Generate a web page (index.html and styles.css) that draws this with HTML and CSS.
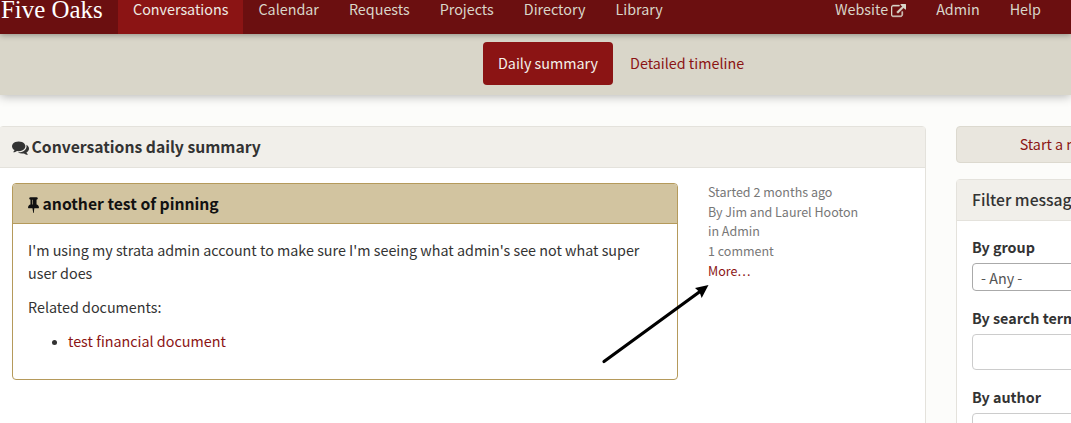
FILE: index.html
```html
<!DOCTYPE html>
<html lang="en">
<head>
<meta charset="utf-8">
<title>Five Oaks</title>
<link rel="stylesheet" href="styles.css">
</head>
<body>
<header class="topbar">
  <a class="brand" href="#">Five Oaks</a>
  <nav class="nav-main">
    <a class="nav-link active" href="#">Conversations</a>
    <a class="nav-link" href="#">Calendar</a>
    <a class="nav-link" href="#">Requests</a>
    <a class="nav-link" href="#">Projects</a>
    <a class="nav-link" href="#">Directory</a>
    <a class="nav-link" href="#">Library</a>
  </nav>
  <nav class="nav-right">
    <a class="nav-link" href="#">Website<svg class="icon-ext" viewBox="0 0 1792 1792"><path fill="currentColor" stroke="currentColor" stroke-width="50" d="M1408 928v320q0 119-84.5 203.5t-203.5 84.5h-832q-119 0-203.5-84.5t-84.5-203.5v-832q0-119 84.5-203.5t203.5-84.5h704q14 0 23 9t9 23v64q0 14-9 23t-23 9h-704q-66 0-113 47t-47 113v832q0 66 47 113t113 47h832q66 0 113-47t47-113v-320q0-14 9-23t23-9h64q14 0 23 9t9 23zm384-864v512q0 26-19 45t-45 19-45-19l-176-176-652 652q-10 10-23 10t-23-10l-114-114q-10-10-10-23t10-23l652-652-176-176q-19-19-19-45t19-45 45-19h512q26 0 45 19t19 45z"/></svg></a>
    <a class="nav-link" href="#">Admin</a>
    <a class="nav-link" href="#">Help</a>
  </nav>
</header>
<div class="subbar">
  <a class="pill active" href="#">Daily summary</a>
  <a class="pill" href="#">Detailed timeline</a>
</div>
<main class="layout">
  <section class="panel panel-main">
    <h2 class="panel-head"><svg class="icon-comments" viewBox="0 0 1792 1792"><path fill="currentColor" d="M1408 768q0 139-94 257t-256.500 186.500-353.500 68.500q-86 0-176-16-124 88-278 128-36 9-86 16h-3q-11 0-20.500-8t-11.500-21q-1-3-1-6.500t.5-6.500 2-6l2.500-5 3.500-5.500 4-5 4.500-5 4-4.500q5-6 23-25t26-29.500 22.500-29 25-38.500 20.500-44q-124-72-195-177t-71-224q0-139 94-257t256.500-186.500 353.500-68.500 353.500 68.500 256.500 186.500 94 257zm384 256q0 120-71 224.500t-195 176.500q10 24 20.500 44t25 38.500 22.500 29 26 29.500 23 25q1 1 4 4.500t4.500 5 4 5 3.500 5.500l2.500 5 2 6 .5 6.500-1 6.500q-3 14-13 22t-22 7q-50-7-86-16-154-40-278-128-90 16-176 16-271 0-472-132 58 4 88 4 161 0 309-45t264-129q125-92 192-212t67-254q0-77-23-152 129 71 204 178t75 230z"/></svg> Conversations daily summary</h2>
    <div class="panel-body convo">
      <article class="card">
        <h3 class="card-head"><svg class="icon-pin" viewBox="0 0 1152 1792"><path fill="currentColor" d="M480 864v-448q0-14-9-23t-23-9-23 9-9 23v448q0 14 9 23t23 9 23-9 9-23zm672 352q0 26-19 45t-45 19h-429l-51 483q-2 12-10.500 20.500t-20.500 8.500h-1q-27 0-32-27l-76-485h-404q-26 0-45-19t-19-45q0-123 78.500-221.500t177.500-98.500v-512q-52 0-90-38t-38-90 38-90 90-38h640q52 0 90 38t38 90-38 90-90 38v512q99 0 177.500 98.500t78.500 221.500z"/></svg> another test of pinning</h3>
        <div class="card-body">
          <p>I'm using my strata admin account to make sure I'm seeing what admin's see not what super user does</p>
          <p>Related documents:</p>
          <ul>
            <li><a href="#">test financial document</a></li>
          </ul>
        </div>
      </article>
      <aside class="meta">
        <div>Started 2 months ago</div>
        <div>By Jim and Laurel Hooton</div>
        <div>in Admin</div>
        <div>1 comment</div>
        <div><a href="#">More…</a></div>
      </aside>
    </div>
  </section>
  <aside class="sidebar">
    <a class="start-btn" href="#">Start a new conversation</a>
    <section class="panel">
      <h2 class="panel-head filter-head">Filter messages</h2>
      <div class="panel-body filter-body">
        <label class="field-label">By group</label>
        <div class="fake-select">- Any -</div>
        <label class="field-label">By search term</label>
        <div class="fake-input"></div>
        <label class="field-label">By author</label>
        <div class="fake-input"></div>
      </div>
    </section>
  </aside>
</main>
<svg class="arrow" viewBox="0 0 1071 423" width="1071" height="423"><line x1="604" y1="361.500" x2="700" y2="291.500" stroke="#000" stroke-width="3.200" stroke-linecap="round"/><path d="M708.500 285 L695 288 L699.500 292 L701.700 298 Z" fill="#000"/></svg>
</body>
</html>
```
FILE: styles.css
```css
* { box-sizing: border-box; }
html, body { margin: 0; height: 423px; overflow: hidden; }
body {
  position: relative;
  width: 1071px;
  background: #fcfcfa;
  color: #333;
  font-family: "Noto Sans CJK JP", "Noto Sans", sans-serif;
  font-size: 14.330px;
  line-height: 23px;
}
a { color: #8b1414; text-decoration: none; }

.topbar {
  position: relative;
  z-index: 2;
  display: flex;
  align-items: stretch;
  height: 34px;
  background: #6b0f10;
  box-shadow: 0 1px 6px rgba(0, 0, 0, .35);
}
.brand {
  padding-left: 1px;
  width: 118px;
  color: #fff;
  font-family: "Liberation Serif", serif;
  font-size: 24.900px;
  line-height: 20px;
}
.nav-main { display: flex; }
.nav-right { display: flex; margin-left: auto; padding-right: 15px; }
.nav-link {
  display: flex;
  align-items: center;
  padding: 0 15px 16px;
  color: #d9d6c9;
  line-height: 16px;
  white-space: pre;
}
.nav-link.active { background: #8b1414; color: #eeece4; }
.icon-ext { width: 15px; height: 15px; margin: 4px 0 0 3px; }

.subbar {
  position: relative;
  z-index: 1;
  display: flex;
  gap: 2px;
  height: 61px;
  padding-top: 8px;
  padding-left: 483px;
  background: #d9d6c9;
  box-shadow: 0 1px 10px rgba(0, 0, 0, .3);
}
.pill {
  height: 43px;
  padding: 9px 15px 11px;
  border-radius: 4px;
}
.pill.active { background: #8b1414; color: #f3f1ea; }

.layout {
  display: flex;
  align-items: flex-start;
  gap: 30px;
  width: 1300px;
  margin-left: -1px;
  padding-top: 31px;
}
.panel {
  border: 1px solid #e4e2dc;
  border-radius: 4px;
  background: #fff;
}
.panel-main { width: 927px; height: 320px; flex: none; }
.panel-head {
  margin: 0;
  padding: 8px 12px;
  height: 41px;
  border-bottom: 1px solid #e4e2dc;
  background: #f1efea;
  color: #333;
  font-size: 15.700px;
  line-height: 23px;
  font-weight: 700;
  white-space: nowrap;
}
.icon-comments { width: 17px; height: 17px; margin-right: -1px; vertical-align: -3px; }
.convo { display: flex; padding: 15px 12px; gap: 30px; }
.card {
  width: 666px;
  height: 197px;
  flex: none;
  border: 1px solid #b59a5b;
  border-radius: 4px;
  overflow: hidden;
}
.card-head {
  margin: 0;
  height: 40px;
  padding: 8px 15px;
  border-bottom: 1px solid #b59a5b;
  background: #d2c4a0;
  color: #111;
  font-size: 15.700px;
  line-height: 23px;
  font-weight: 700;
}
.icon-pin { width: 11px; height: 17px; vertical-align: -3px; }
.card-body { padding: 14px 15px; }
.card-body p { margin: 0 0 11px; }
.card-body ul { margin: 0; padding-left: 40px; }
.card-body li::marker { font-size: 12px; }
.meta { color: #777; font-size: 12.500px; line-height: 19.700px; margin-top: -1px; }

.sidebar { width: 292px; flex: none; }
.start-btn {
  display: block;
  height: 37px;
  padding: 5px 12px;
  margin-bottom: 16px;
  text-align: center;
  background: #e9e6de;
  border: 1px solid #dcd9cf;
  border-radius: 4px;
}
.filter-head { font-weight: 500; padding-left: 15px; }
.filter-body { padding: 15px; }
.field-label { display: block; font-weight: 700; line-height: 21px; margin-bottom: 6px; }
.fake-select {
  height: 28px;
  padding: 2px 8px;
  margin-bottom: 16px;
  border: 1px solid #aaa;
  border-radius: 4px;
  color: #555;
}
.fake-input {
  height: 36px;
  margin-bottom: 16px;
  border: 1px solid #ccc;
  border-radius: 4px;
}
.arrow { position: absolute; left: 0; top: 0; z-index: 5; pointer-events: none; }
```
